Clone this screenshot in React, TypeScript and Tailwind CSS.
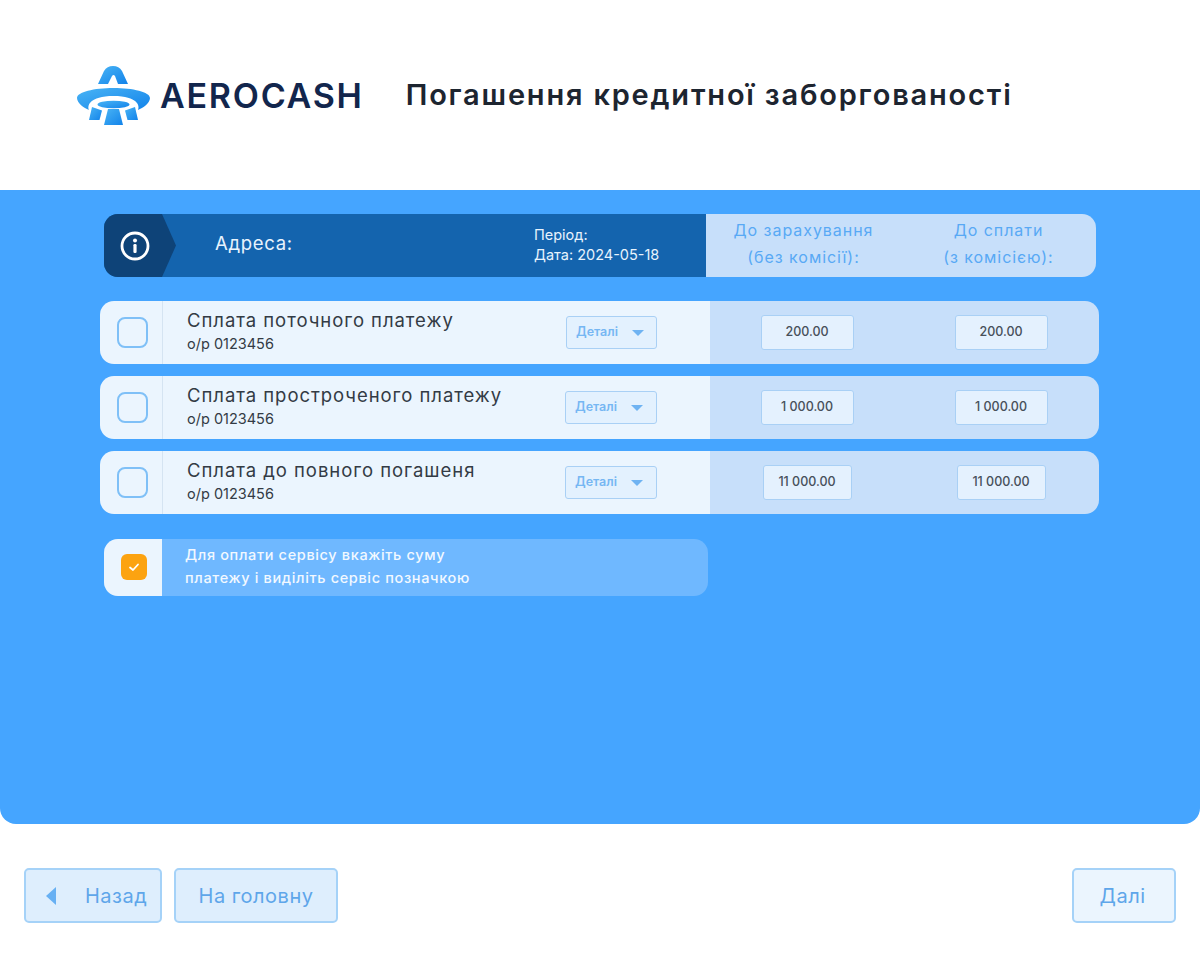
const rows = [
  { title: "Сплата поточного платежу", amount: "200.00", inputW: "w-[93px]", detailsW: "w-[91px]" },
  { title: "Сплата простроченого платежу", amount: "1 000.00", inputW: "w-[93px]", detailsW: "w-[92px]" },
  { title: "Сплата до повного погашеня", amount: "11 000.00", inputW: "w-[89px]", detailsW: "w-[92px]" },
];

function Logo() {
  return (
    <svg width="84" height="70" viewBox="0 0 84 70" className="shrink-0">
      <defs>
        <linearGradient id="logoBlue" x1="0" y1="0" x2="1" y2="1">
          <stop offset="0" stopColor="#49b4f5" />
          <stop offset="1" stopColor="#1283ea" />
        </linearGradient>
      </defs>
      <path
        d="M26 24 L32 11 Q35 6 41 6 Q47 6 50 11 L56 24 L46 24 L43 16 Q41.500 14 40 16 L36 24 Z"
        fill="url(#logoBlue)"
      />
      <path
        fillRule="evenodd"
        d="M5 38 C5 32 22 28 41.500 28 C61 28 78 32 78 38 C78 43 71 48 66 50 C68 46 66 36 41.500 36 C17 36 15 46 17 50 C12 48 5 43 5 38 Z"
        fill="url(#logoBlue)"
      />
      <ellipse cx="41.500" cy="44.500" rx="16" ry="3.800" fill="url(#logoBlue)" />
      <path d="M36 49 L47 49 L51 65 L32 65 Z" fill="url(#logoBlue)" />
      <path d="M20 47 L30 50.500 L27.500 60 L17 60 Z" fill="url(#logoBlue)" />
      <path d="M63 47 L53 50.500 L55.500 60 L66 60 Z" fill="url(#logoBlue)" />
    </svg>
  );
}

function InfoIcon() {
  return (
    <svg width="32" height="32" viewBox="0 0 32 32">
      <circle cx="16" cy="16" r="13" fill="none" stroke="#fff" strokeWidth="2.800" />
      <circle cx="16" cy="10.500" r="2" fill="#fff" />
      <rect x="14.400" y="14" width="3.200" height="9" rx="1.200" fill="#fff" />
    </svg>
  );
}

function Row({ title, amount, inputW, detailsW }: (typeof rows)[number]) {
  const input = `${inputW} h-[35px] flex items-center justify-center rounded-[3px] border border-[#a9d0f5] bg-[#e4f1fe] text-[12.500px] font-medium text-[#47505a]`;
  return (
    <div className="flex h-[63px] overflow-hidden rounded-[14px]">
      <div className="flex w-[610px] bg-[#ebf5fe]">
        <div className="flex w-[63px] items-center justify-center border-r border-[#d5e4f2] pl-[2px]">
          <div className="h-[31px] w-[31px] rounded-lg border-2 border-[#7fc0f7] bg-[#ebf5fe]" />
        </div>
        <div className="flex flex-1 flex-col justify-center pb-[3px] pl-[24px]">
          <div className="text-[18.500px] leading-[26px] tracking-[0.95px] text-[#333b45]">{title}</div>
          <div className="text-[14.500px] leading-[22px] text-[#333b45]">о/р 0123456</div>
        </div>
        <div className="flex items-center pr-[53px]">
          <div className={`${detailsW} flex h-[33px] items-center rounded-[3px] border border-[#a9d0f5] bg-[#e3f1fe] pl-[9px]`}>
            <span className="text-[12.500px] font-semibold text-[#76b7f3]">Деталі</span>
            <span className="ml-[14px] h-0 w-0 border-x-[6.500px] border-t-[6px] border-x-transparent border-t-[#6fb3f2]" />
          </div>
        </div>
      </div>
      <div className="grid flex-1 grid-cols-2 items-center justify-items-center bg-[#c7dffa] pr-px">
        <div className={input}>{amount}</div>
        <div className={input}>{amount}</div>
      </div>
    </div>
  );
}

export default function App() {
  return (
    <div className="flex h-[953px] w-[1200px] flex-col bg-white font-['Inter',sans-serif]">
      <header className="flex h-[190px] items-center pl-[72px]">
        <Logo />
        <span className="ml-[4px] text-[34px] font-semibold tracking-[1.750px] text-[#12264d]">AEROCASH</span>
        <h1 className="ml-[42px] text-[29px] font-semibold tracking-[1.800px] text-[#1d2530]">
          Погашення кредитної заборгованості
        </h1>
      </header>

      <main className="flex h-[634px] flex-col rounded-b-2xl bg-[#45a5ff] pl-[100px] pr-[101px] pt-[24px]">
        <div className="mx-[4px] flex h-[63px] w-[992px] overflow-hidden rounded-[14px]">
          <div className="flex w-[602px] items-center bg-[#1464ae] text-white">
            <div className="flex h-full w-[72px] items-center bg-[#0e4378] pl-[15px] [clip-path:polygon(0_0,58px_0,72px_50%,58px_100%,0_100%)]">
              <InfoIcon />
            </div>
            <span className="ml-[39px] w-[319px] pb-[4px] text-[18.500px] tracking-[0.7px] text-[#e8f3fd]">Адреса:</span>
            <div className="pb-[2px] text-[14.500px] leading-[20px] text-[#e8f3fd]">
              <div>Період:</div>
              <div>Дата: 2024-05-18</div>
            </div>
          </div>
          <div className="grid flex-1 grid-cols-2 items-center bg-[#c7dffa] pb-[4px] text-center text-[16px] leading-[27px] tracking-[0.95px] text-[#58a9f5]">
            <div>
              До зарахування
              <br />
              (без комісії):
            </div>
            <div>
              До сплати
              <br />
              (з комісією):
            </div>
          </div>
        </div>

        <div className="mt-[24px] flex flex-col gap-[12px]">
          {rows.map((r) => (
            <Row key={r.title} {...r} />
          ))}
        </div>

        <div className="ml-[4px] mt-[25px] flex h-[57px] w-[604px] overflow-hidden rounded-[14px] bg-[#6fb8ff]">
          <div className="flex w-[58px] items-center justify-center bg-[#ebf5fe] pb-[2px] pl-[1px]">
            <div className="flex h-[26px] w-[26px] items-center justify-center rounded-md bg-[#fca311]">
              <svg width="14" height="14" viewBox="0 0 14 14" fill="none" stroke="#fff" strokeWidth="1.800" strokeLinecap="round" strokeLinejoin="round">
                <path d="M3 7.500 L6 10 L11 4.500" />
              </svg>
            </div>
          </div>
          <div className="flex flex-col justify-center pb-[4px] pl-[23px] text-[14.500px] font-medium leading-[23px] tracking-[0.65px] text-[#f2f8ff]">
            <div>Для оплати сервісу вкажіть суму</div>
            <div>платежу і виділіть сервіс позначкою</div>
          </div>
        </div>
      </main>

      <footer className="flex justify-between px-[24px] pt-[44px] text-[20px] tracking-[0.5px] text-[#5ea6ea]">
        <div className="flex gap-[12px]">
          <div className="flex h-[55px] w-[138px] items-center rounded-[5px] border-2 border-[#a5d2f8] bg-[#deeefd] pl-[20px]">
            <span className="h-0 w-0 border-y-[9px] border-r-[10px] border-y-transparent border-r-[#67b0f3]" />
            <span className="ml-[29px]">Назад</span>
          </div>
          <div className="flex h-[55px] w-[164px] items-center justify-center rounded-[5px] border-2 border-[#a5d2f8] bg-[#deeefd]">
            На головну
          </div>
        </div>
        <div className="flex h-[55px] w-[104px] items-center justify-center rounded-[5px] border-2 border-[#a5d2f8] bg-[#ebf5fe] pr-[3px]">
          Далі
        </div>
      </footer>
    </div>
  );
}
